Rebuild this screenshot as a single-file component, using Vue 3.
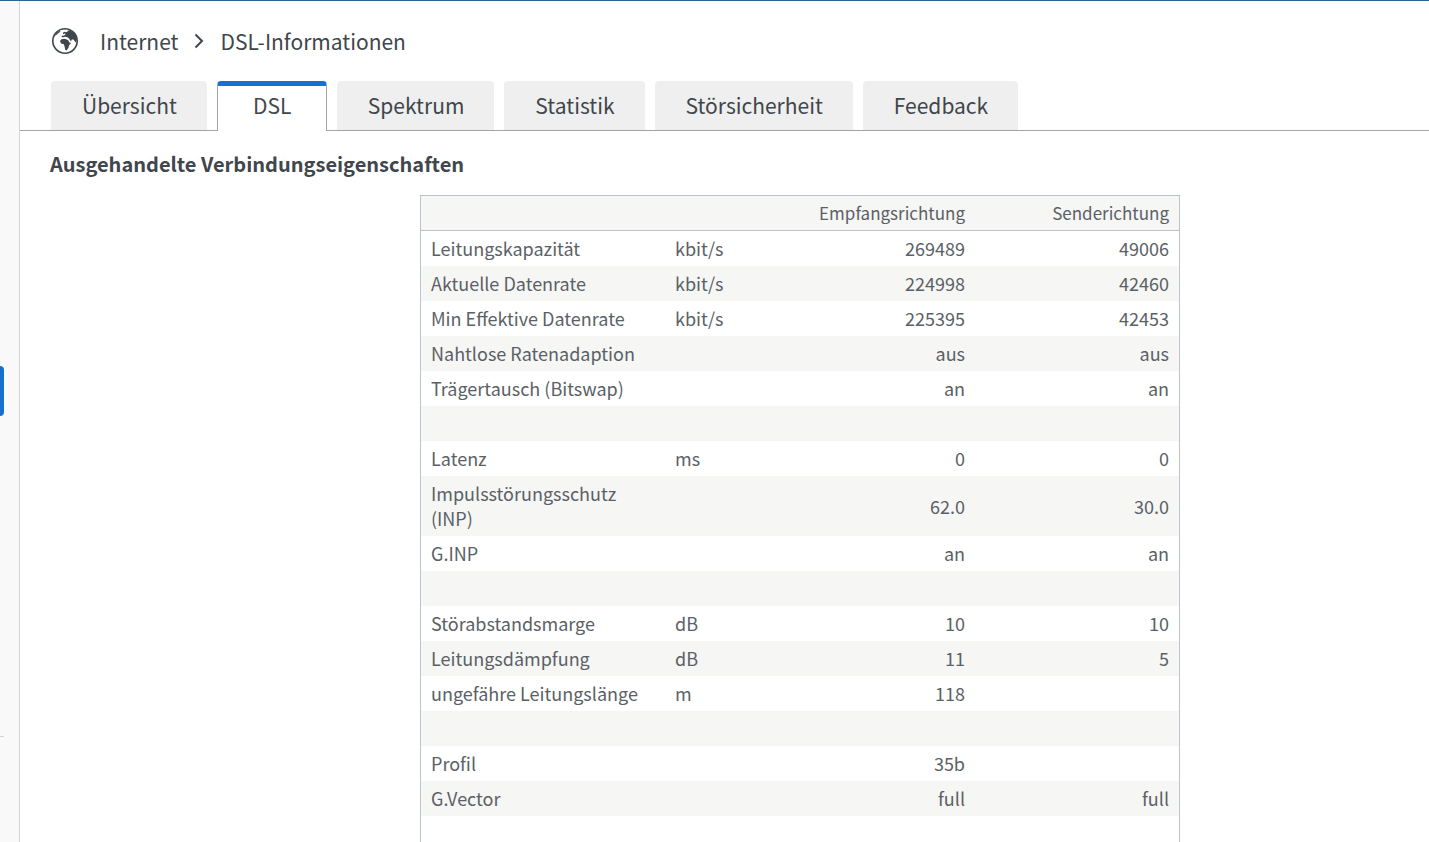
<script setup>
const tabs = [
  { label: 'Übersicht' },
  { label: 'DSL', active: true },
  { label: 'Spektrum' },
  { label: 'Statistik' },
  { label: 'Störsicherheit' },
  { label: 'Feedback' },
]

const rows = [
  ['Leitungskapazität', 'kbit/s', '269489', '49006'],
  ['Aktuelle Datenrate', 'kbit/s', '224998', '42460'],
  ['Min Effektive Datenrate', 'kbit/s', '225395', '42453'],
  ['Nahtlose Ratenadaption', '', 'aus', 'aus'],
  ['Trägertausch (Bitswap)', '', 'an', 'an'],
  ['', '', '', ''],
  ['Latenz', 'ms', '0', '0'],
  ['Impulsstörungsschutz (INP)', '', '62.0', '30.0'],
  ['G.INP', '', 'an', 'an'],
  ['', '', '', ''],
  ['Störabstandsmarge', 'dB', '10', '10'],
  ['Leitungsdämpfung', 'dB', '11', '5'],
  ['ungefähre Leitungslänge', 'm', '118', ''],
  ['', '', '', ''],
  ['Profil', '', '35b', ''],
  ['G.Vector', '', 'full', 'full'],
  ['', '', '', ''],
]
</script>

<template>
  <div class="page">
    <aside class="sidebar">
      <span class="marker"></span>
      <span class="divider"></span>
    </aside>
    <main class="main">
      <nav class="breadcrumb">
        <svg class="globe" viewBox="0 0 26 26" aria-hidden="true">
          <circle cx="13" cy="13" r="12.200" fill="#fff" stroke="#3f464c" stroke-width="1.600" />
          <path
            fill="#3f464c"
            d="M11 4.500 13 3.800 14.500 4.200 17 2 21 4 24 7.500 25 12 23.500 14.500 21.500 11.500 19.800 11.500 19 13.500 17 10.500 15.500 9.300 13 8.800 11.200 9.300 9.500 9 10 7.800 12.200 7.400 13.800 6 12.500 5.500 11 6Z"
          />
          <path
            fill="#3f464c"
            d="M8 13 9.500 11.200 12.500 10.800 16 12 17.500 14.500 19 15 17 17.500 16.500 19.800 14.500 22.500 13.200 22 12.600 18.500 11.800 16.300 9 15.500ZM4.500 5 7.500 3 8.500 3.600 6 5.500 4 7.200 2.800 7.800Z"
          />
        </svg>
        <a href="#internet">Internet</a>
        <svg class="chevron" viewBox="0 0 10 16" aria-hidden="true">
          <path d="M1.500 1.500 8 8 1.500 14.500" fill="none" stroke="#3f464c" stroke-width="2" />
        </svg>
        <a href="#dsl">DSL-Informationen</a>
      </nav>
      <div class="tabs" role="tablist">
        <button
          v-for="tab in tabs"
          :key="tab.label"
          type="button"
          role="tab"
          class="tab"
          :class="{ active: tab.active }"
          :aria-selected="!!tab.active"
        >{{ tab.label }}</button>
      </div>
      <section class="content">
        <h1>Ausgehandelte Verbindungseigenschaften</h1>
        <table>
          <colgroup>
            <col class="col-name" />
            <col class="col-unit" />
            <col class="col-down" />
            <col class="col-up" />
          </colgroup>
          <thead>
            <tr>
              <th></th>
              <th></th>
              <th scope="col">Empfangsrichtung</th>
              <th scope="col">Senderichtung</th>
            </tr>
          </thead>
          <tbody>
            <tr v-for="(row, i) in rows" :key="i">
              <td v-for="(cell, j) in row" :key="j">{{ cell }}</td>
            </tr>
          </tbody>
        </table>
      </section>
    </main>
  </div>
</template>

<style>
body {
  margin: 0;
  background: #fff;
}
</style>

<style scoped>
.page {
  box-sizing: border-box;
  display: flex;
  height: 100vh;
  overflow: hidden;
  border-top: 1px solid #2f6093;
  font-family: "Noto Sans CJK SC", "Noto Sans", sans-serif;
  font-size: 21px;
  color: #3f464c;
}
.sidebar {
  display: flex;
  flex: none;
  flex-direction: column;
  width: 19px;
  border-right: 1px solid #d5d5d5;
  background: #f9f9f9;
}
.marker {
  width: 4px;
  height: 50px;
  margin-top: 365px;
  border-radius: 0 4px 4px 0;
  background: #1770cc;
}
.divider {
  width: 4px;
  height: 1px;
  margin-top: 320px;
  background: #d5d5d5;
}
.main {
  flex: 1;
  min-width: 0;
}
.breadcrumb {
  display: flex;
  align-items: center;
  height: 80px;
  padding-left: 32px;
}
.breadcrumb a {
  color: inherit;
  text-decoration: none;
}
.globe {
  width: 26px;
  height: 26px;
  margin-right: 22px;
}
.chevron {
  width: 10px;
  height: 16px;
  margin: 0 16px;
}
.tabs {
  display: flex;
  gap: 10px;
  height: 49px;
  padding-left: 31px;
  border-bottom: 1px solid #a3a3a3;
}
.tab {
  box-sizing: border-box;
  min-width: 110px;
  height: 49px;
  padding: 0 30px 2px 31px;
  border: 0;
  border-radius: 4px 4px 0 0;
  background: #efefef;
  color: inherit;
  font: inherit;
}
.tab.active {
  height: 50px;
  border: 1px solid #a3a3a3;
  border-top: 5px solid #1770cc;
  border-bottom: 0;
  padding-bottom: 8px;
  background: #fff;
}
.content {
  padding-left: 30px;
}
h1 {
  margin: 0;
  padding: 17px 0 15px;
  font-size: 20px;
  font-weight: 700;
  line-height: 32px;
}
table {
  width: 760px;
  margin-left: 370px;
  table-layout: fixed;
  border: 1px solid #b8c6cc;
  border-spacing: 0;
  box-sizing: border-box;
  font-size: 18px;
  line-height: 25px;
  color: #5a6166;
}
.col-name {
  width: 244px;
}
.col-unit {
  width: 130px;
}
.col-down {
  width: 180px;
}
th,
td {
  height: 25px;
  padding: 5px 10px;
  font-weight: 400;
  text-align: left;
}
th {
  height: 24px;
  font-size: 17px;
  line-height: 24px;
  border-bottom: 1px solid #b8c6cc;
  background: #f6f6f5;
}
th:nth-child(n + 3),
td:nth-child(n + 3) {
  text-align: right;
}
tbody tr:nth-child(even) {
  background: #f6f6f5;
}
</style>
